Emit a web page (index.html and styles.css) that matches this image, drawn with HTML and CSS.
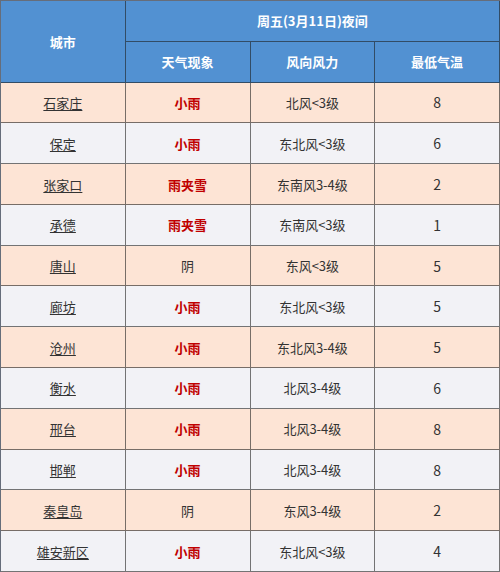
FILE: index.html
```html
<!DOCTYPE html>
<html lang="zh-CN">
<head>
<meta charset="utf-8">
<title>周五(3月11日)夜间</title>
<link rel="stylesheet" href="styles.css">
</head>
<body>
<div class="table">
  <div class="cell head city-head">城市</div>
  <div class="cell head date-head">周五(3月11日)夜间</div>
  <div class="cell head">天气现象</div>
  <div class="cell head">风向风力</div>
  <div class="cell head">最低气温</div>

  <div class="cell odd"><span class="city">石家庄</span></div>
  <div class="cell odd rain">小雨</div>
  <div class="cell odd">北风&lt;3级</div>
  <div class="cell odd temp">8</div>

  <div class="cell even"><span class="city">保定</span></div>
  <div class="cell even rain">小雨</div>
  <div class="cell even">东北风&lt;3级</div>
  <div class="cell even temp">6</div>

  <div class="cell odd"><span class="city">张家口</span></div>
  <div class="cell odd rain">雨夹雪</div>
  <div class="cell odd">东南风3-4级</div>
  <div class="cell odd temp">2</div>

  <div class="cell even"><span class="city">承德</span></div>
  <div class="cell even rain">雨夹雪</div>
  <div class="cell even">东南风&lt;3级</div>
  <div class="cell even temp">1</div>

  <div class="cell odd"><span class="city">唐山</span></div>
  <div class="cell odd">阴</div>
  <div class="cell odd">东风&lt;3级</div>
  <div class="cell odd temp">5</div>

  <div class="cell even"><span class="city">廊坊</span></div>
  <div class="cell even rain">小雨</div>
  <div class="cell even">东北风&lt;3级</div>
  <div class="cell even temp">5</div>

  <div class="cell odd"><span class="city">沧州</span></div>
  <div class="cell odd rain">小雨</div>
  <div class="cell odd">东北风3-4级</div>
  <div class="cell odd temp">5</div>

  <div class="cell even"><span class="city">衡水</span></div>
  <div class="cell even rain">小雨</div>
  <div class="cell even">北风3-4级</div>
  <div class="cell even temp">6</div>

  <div class="cell odd"><span class="city">邢台</span></div>
  <div class="cell odd rain">小雨</div>
  <div class="cell odd">北风3-4级</div>
  <div class="cell odd temp">8</div>

  <div class="cell even"><span class="city">邯郸</span></div>
  <div class="cell even rain">小雨</div>
  <div class="cell even">北风3-4级</div>
  <div class="cell even temp">8</div>

  <div class="cell odd"><span class="city">秦皇岛</span></div>
  <div class="cell odd">阴</div>
  <div class="cell odd">东风3-4级</div>
  <div class="cell odd temp">2</div>

  <div class="cell even"><span class="city">雄安新区</span></div>
  <div class="cell even rain">小雨</div>
  <div class="cell even">东北风&lt;3级</div>
  <div class="cell even temp">4</div>
</div>
</body>
</html>
```
FILE: styles.css
```css
html, body {
  margin: 0;
  padding: 0;
  background: #ffffff;
}

.table {
  box-sizing: border-box;
  width: 500px;
  height: 572px;
  display: grid;
  grid-template-columns: repeat(4, 1fr);
  grid-template-rows: repeat(14, 1fr);
  border-top: 1px solid rgba(20, 30, 50, 0.65);
  border-left: 1px solid rgba(20, 30, 50, 0.65);
  font-family: "Noto Sans CJK SC", "Noto Sans", sans-serif;
  font-size: 13px;
  color: #333333;
}

.cell {
  box-sizing: border-box;
  display: flex;
  align-items: center;
  justify-content: center;
  border-right: 1px solid rgba(30, 30, 30, 0.6);
  border-bottom: 1px solid rgba(30, 30, 30, 0.6);
  line-height: 1;
}

.head {
  background: #5291d2;
  color: #ffffff;
  font-weight: bold;
}

.city-head {
  grid-row: span 2;
}

.date-head {
  grid-column: span 3;
}

.odd {
  background: #fde4d5;
}

.even {
  background: #f2f2f6;
}

.city {
  text-decoration: underline;
  text-underline-offset: 2px;
  text-decoration-thickness: 1px;
}

.rain {
  color: #c00000;
  font-weight: bold;
}

.temp {
  font-size: 14px;
}
```
